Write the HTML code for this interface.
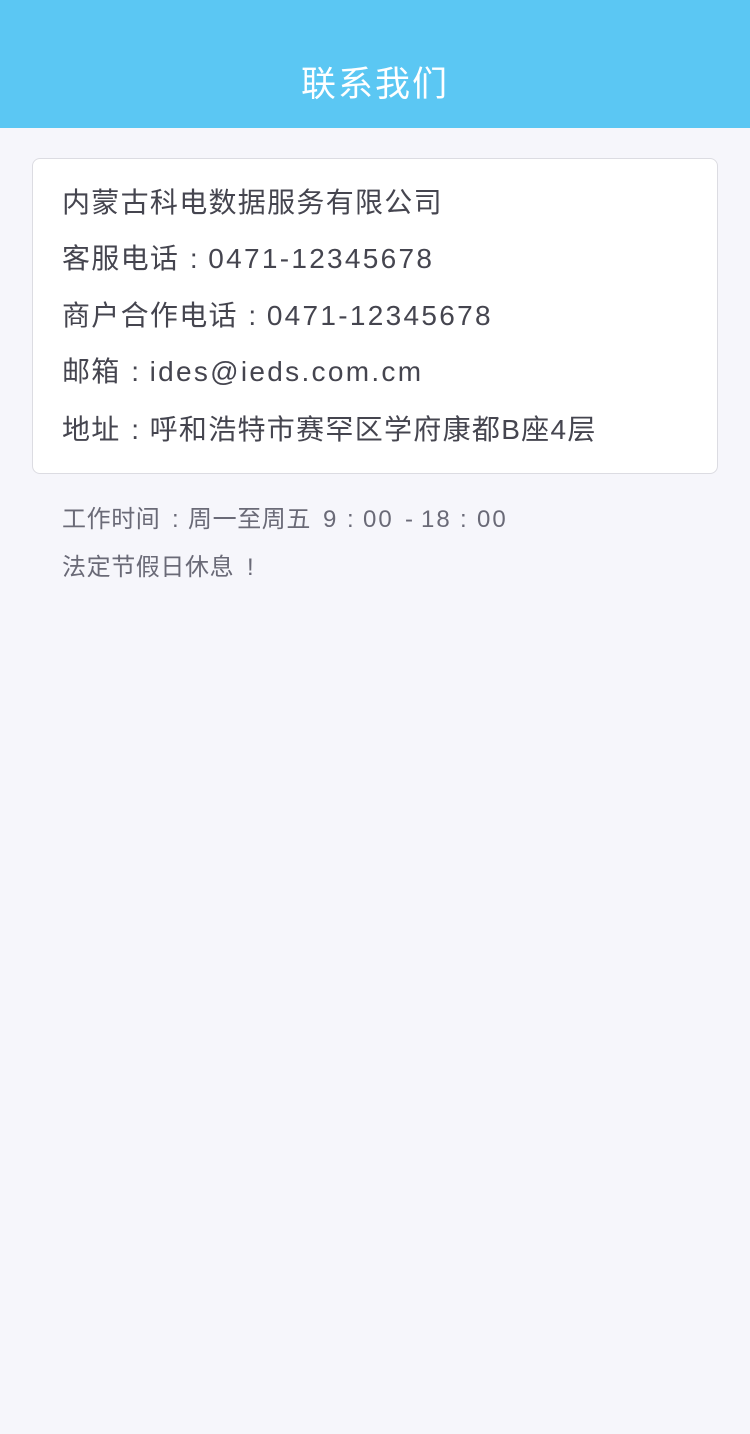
<!DOCTYPE html>
<html><head><meta charset="utf-8"><style>
*{margin:0;padding:0;box-sizing:border-box}
body{width:750px;height:1434px;background:#f6f6fb;font-family:"Liberation Sans","Noto Sans CJK SC",sans-serif;position:relative;overflow:hidden}
.hd{position:absolute;left:0;top:0;width:750px;height:128px;background:#5bc7f3}
.hd div{position:absolute;left:0;right:0;top:63px;text-align:center;color:#fff;font-size:35px;line-height:44px;letter-spacing:2px}
.card{position:absolute;left:32px;top:158px;width:686px;height:316px;background:#fff;border:1px solid #dcdce2;border-radius:8px}
.l{position:absolute;left:62px;font-size:28px;line-height:40px;color:#45454f;letter-spacing:1.3px;white-space:nowrap}
.f{position:absolute;font-size:24px;line-height:32px;color:#6a6a77;white-space:nowrap;letter-spacing:0.6px}
.c{display:inline-block;width:29px;text-align:center;letter-spacing:0}
.n{letter-spacing:2.3px}
</style></head><body>
<div class="hd"><div>联系我们</div></div>
<div class="card"></div>
<div class="l" style="top:183px">内蒙古科电数据服务有限公司</div>
<div class="l" style="top:239px">客服电话<span class="c">:</span><span class="n">0471-12345678</span></div>
<div class="l" style="top:296px">商户合作电话<span class="c">:</span><span class="n">0471-12345678</span></div>
<div class="l" style="top:352px">邮箱<span class="c">:</span><span class="n">ides@ieds.com.cm</span></div>
<div class="l" style="top:410px">地址<span class="c">:</span>呼和浩特市赛罕区学府康都B座4层</div>
<div class="f" style="top:504px;left:62px">工作时间</div>
<div class="f" style="top:504px;left:172px">:</div>
<div class="f" style="top:504px;left:188px">周一至周五</div>
<div class="f" style="top:504px;left:323px">9</div>
<div class="f" style="top:504px;left:347px">:</div>
<div class="f" style="top:504px;left:363px;letter-spacing:2px">00</div>
<div class="f" style="top:504px;left:405px">-</div>
<div class="f" style="top:504px;left:421px;letter-spacing:2px">18</div>
<div class="f" style="top:504px;left:460px">:</div>
<div class="f" style="top:504px;left:477px;letter-spacing:2px">00</div>
<div class="f" style="top:552px;left:62px">法定节假日休息</div>
<div class="f" style="top:552px;left:247px">!</div>
</body></html>
